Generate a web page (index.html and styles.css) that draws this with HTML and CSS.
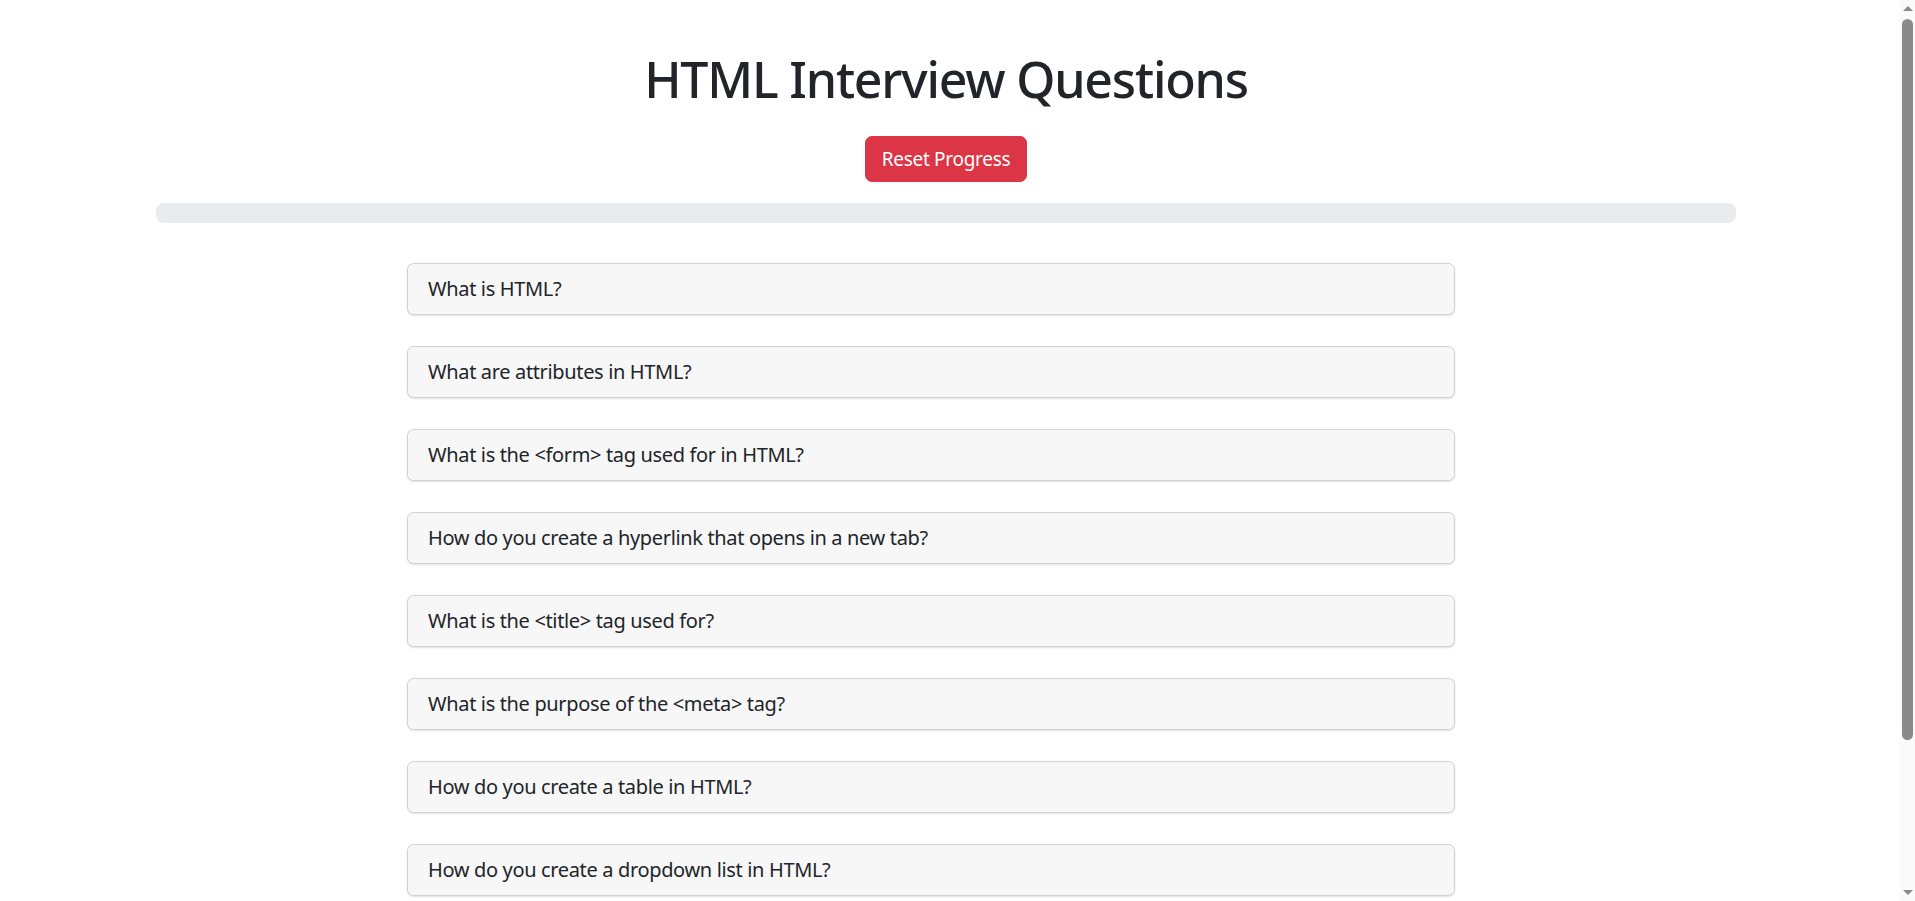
FILE: index.html
```html
<!DOCTYPE html>
<html lang="en">
<head>
<meta charset="utf-8">
<title>HTML Interview Questions</title>
<link rel="stylesheet" href="styles.css">
</head>
<body>
<div class="page">
  <h1 class="title">HTML Interview Questions</h1>
  <div class="actions">
    <button class="btn-reset" type="button">Reset Progress</button>
  </div>
  <div class="progress"><div class="progress-bar" style="width:0%"></div></div>
  <div class="questions">
    <div class="card"><div class="card-header">What is HTML?</div></div>
    <div class="card"><div class="card-header">What are attributes in HTML?</div></div>
    <div class="card"><div class="card-header">What is the &lt;form&gt; tag used for in HTML?</div></div>
    <div class="card"><div class="card-header">How do you create a hyperlink that opens in a new tab?</div></div>
    <div class="card"><div class="card-header">What is the &lt;title&gt; tag used for?</div></div>
    <div class="card"><div class="card-header">What is the purpose of the &lt;meta&gt; tag?</div></div>
    <div class="card"><div class="card-header">How do you create a table in HTML?</div></div>
    <div class="card"><div class="card-header">How do you create a dropdown list in HTML?</div></div>
    <div class="card"><div class="card-header">What is the difference between block and inline elements?</div></div>
    <div class="card"><div class="card-header">What are semantic elements in HTML?</div></div>
  </div>
</div>
<div class="scrollbar" aria-hidden="true">
  <div class="sb-arrow sb-up"></div>
  <div class="sb-track"><div class="sb-thumb"></div></div>
  <div class="sb-arrow sb-down"></div>
</div>
</body>
</html>
```
FILE: styles.css
```css
html, body {
  margin: 0;
  padding: 0;
  background: #fff;
}
body {
  font-family: "Noto Sans", "Open Sans", "Liberation Sans", sans-serif;
  color: #212529;
  font-size: 20px;
  line-height: 1.5;
}
.page {
  padding: 49px 179px 23px 156px;
}
.title {
  margin: 0;
  font-size: 50px;
  line-height: 60px;
  font-weight: 500;
  text-align: center;
  letter-spacing: -1.2px;
}
.actions {
  display: flex;
  justify-content: center;
  margin-top: 27px;
}
.btn-reset {
  font-family: inherit;
  font-size: 19px;
  line-height: 28px;
  padding: 8px 16px;
  color: #fff;
  background: #dc3545;
  border: 1px solid #dc3545;
  border-radius: 7px;
  letter-spacing: -0.3px;
  cursor: pointer;
}
.progress {
  margin-top: 21px;
  height: 20px;
  background: #e9ecef;
  border-radius: 8px;
  overflow: hidden;
}
.progress-bar {
  height: 100%;
  background: #0d6efd;
}
.questions {
  margin: 40px 0 0 251px;
  width: 1048px;
  display: flex;
  flex-direction: column;
  gap: 31px;
}
.card {
  border: 1px solid rgba(0, 0, 0, 0.175);
  border-radius: 7px;
  background: #fff;
  box-shadow: 0 1px 2px rgba(0, 0, 0, 0.12);
  overflow: hidden;
}
.card-header {
  background: #f7f7f7;
  padding: 10px 20px;
  font-size: 20px;
  line-height: 30px;
  letter-spacing: -0.35px;
  position: relative;
  top: 0;
}
.scrollbar {
  position: fixed;
  top: 0;
  right: 0;
  bottom: 0;
  width: 15px;
  background: #fafafa;
  display: flex;
  flex-direction: column;
  align-items: center;
}
.sb-arrow {
  width: 0;
  height: 0;
  border-left: 5px solid transparent;
  border-right: 5px solid transparent;
}
.sb-up {
  margin-top: 6px;
  border-bottom: 5px solid #8a8a8a;
}
.sb-down {
  margin-bottom: 6px;
  border-top: 5px solid #8a8a8a;
}
.sb-track {
  flex: 1;
  width: 100%;
  display: flex;
  justify-content: center;
  padding-top: 8px;
}
.sb-thumb {
  width: 11px;
  height: 721px;
  background: #8a8a8a;
  border-radius: 6px;
}
```
